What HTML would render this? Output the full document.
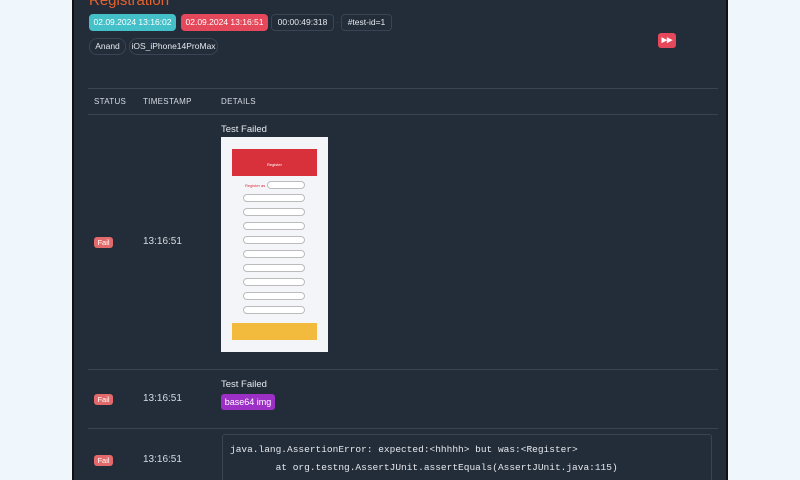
<!DOCTYPE html>
<html><head><meta charset="utf-8"><style>
*{box-sizing:border-box;margin:0;padding:0}
html,body{width:800px;height:480px;overflow:hidden}
body{background:#eff6fc;font-family:"Liberation Sans",sans-serif;position:relative}
#panel{position:absolute;left:72px;top:0;width:656px;height:480px;background:#232c39;border-left:2px solid #111;border-right:2px solid #111;overflow:hidden}
.a{position:absolute}
.title{left:15px;top:-8px;color:#e8622c;font-size:15px}
.b{position:absolute;height:17px;font-size:8.5px;line-height:15px;border-radius:4px;color:#e6e9ee;border:1px solid #3a4452;white-space:nowrap;text-align:center;overflow:hidden}
.line{position:absolute;left:14px;width:630px;height:1px;background:#3a4350}
.h{font-size:8px;color:#d7dce3;letter-spacing:.3px}
.fail{position:absolute;left:20px;width:19px;height:11px;background:#e26a6a;border-radius:3px;color:#fff;font-size:7.5px;line-height:11px;text-align:center}
.ts{position:absolute;left:69px;font-size:10px;color:#d7dce3}
.tf{position:absolute;left:147px;font-size:9.5px;color:#e6e9ee}
.in{position:absolute;left:22px;width:62px;height:8px;border:1px solid #bbb;border-radius:5px;background:#fff}
</style></head><body>
<div id="panel">
<div class="a title">Registration</div>
<div class="b" style="left:15px;top:14px;width:87px;background:#44c0c8;border-color:#44c0c8;color:#fff">02.09.2024 13:16:02</div>
<div class="b" style="left:107px;top:14px;width:87px;background:#e4485a;border-color:#e4485a;color:#fff">02.09.2024 13:16:51</div>
<div class="b" style="left:197px;top:14px;width:63px">00:00:49:318</div>
<div class="a" style="left:262px;top:18px;color:#555;font-size:8px">·</div>
<div class="b" style="left:267px;top:14px;width:51px">#test-id=1</div>
<div class="b" style="left:15px;top:38px;width:37px;border-radius:8px">Anand</div>
<div class="b" style="left:55px;top:38px;width:89px;border-radius:8px">iOS_iPhone14ProMax</div>
<div class="a" style="left:584px;top:33px;width:18px;height:15px;background:#e4485a;border-radius:3px;color:#fff;font-size:7px;line-height:15px;text-align:center;font-weight:bold">▶▶</div>
<div class="line" style="top:88px"></div>
<div class="a h" style="left:20px;top:97px">STATUS</div>
<div class="a h" style="left:69px;top:97px">TIMESTAMP</div>
<div class="a h" style="left:147px;top:97px">DETAILS</div>
<div class="line" style="top:114px"></div>
<div class="tf" style="top:124px">Test Failed</div>
<div class="a" style="left:147px;top:137px;width:107px;height:215px;background:#f3f5f8">
 <div class="a" style="left:11px;top:12px;width:85px;height:27px;background:#d9313b;color:#fff;font-size:4px;text-align:center;padding-top:13px">Register</div>
 <div class="a" style="left:24px;top:46px;font-size:4px;color:#d9313b">Register as</div>
 <div class="a" style="left:46px;top:44px;width:38px;height:8px;border:1px solid #bbb;border-radius:5px;background:#fff"></div>
 <div class="in" style="top:57px"></div><div class="in" style="top:71px"></div><div class="in" style="top:85px"></div>
 <div class="in" style="top:99px"></div><div class="in" style="top:113px"></div><div class="in" style="top:127px"></div>
 <div class="in" style="top:141px"></div><div class="in" style="top:155px"></div><div class="in" style="top:169px"></div>
 <div class="a" style="left:11px;top:186px;width:85px;height:17px;background:#f2bb3e"></div>
</div>
<div class="fail" style="top:237px">Fail</div>
<div class="ts" style="top:236px">13:16:51</div>
<div class="line" style="top:369px"></div>
<div class="tf" style="top:379px">Test Failed</div>
<div class="a" style="left:147px;top:394px;width:54px;height:16px;background:#9b2fc6;border-radius:3px;color:#fff;font-size:9px;line-height:16px;text-align:center">base64 img</div>
<div class="fail" style="top:394px">Fail</div>
<div class="ts" style="top:393px">13:16:51</div>
<div class="line" style="top:428px"></div>
<div class="fail" style="top:455px">Fail</div>
<div class="ts" style="top:454px">13:16:51</div>
<div class="a" style="left:148px;top:434px;width:490px;height:60px;border:1px solid #3a4452;border-radius:3px;font-family:'Liberation Mono',monospace;font-size:9.5px;color:#e6e9ee;padding:6px 7px;line-height:18px;white-space:pre">java.lang.AssertionError: expected:&lt;hhhhh&gt; but was:&lt;Register&gt;
        at org.testng.AssertJUnit.assertEquals(AssertJUnit.java:115)</div>
</div>
</body></html>
